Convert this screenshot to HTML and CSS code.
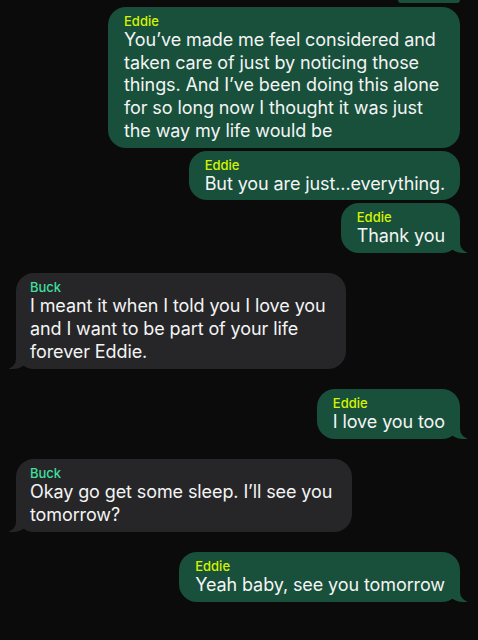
FILE: index.html
```html
<!DOCTYPE html>
<html lang="en">
<head>
    <meta charset="UTF-8">
    <meta name="viewport" content="width=device-width, initial-scale=1.0">
    <title>Messages</title>
    <link rel="stylesheet" href="styles.css">
</head>
<body>
    <div class="thread">
        <div class="group sent">
            <div class="bubble stub"></div>
            <div class="bubble wide">
                <div class="name">Eddie</div>
                <div class="text">You’ve made me feel considered and<br>taken care of just by noticing those<br>things. And I’ve been doing this alone<br>for so long now I thought it was just<br>the way my life would be</div>
            </div>
            <div class="bubble">
                <div class="name">Eddie</div>
                <div class="text">But you are just...everything.</div>
            </div>
            <div class="bubble tail">
                <div class="name">Eddie</div>
                <div class="text">Thank you</div>
            </div>
        </div>

        <div class="group received">
            <div class="bubble tail">
                <div class="name">Buck</div>
                <div class="text">I meant it when I told you I love you<br>and I want to be part of your life<br>forever Eddie.</div>
            </div>
        </div>

        <div class="group sent">
            <div class="bubble tail">
                <div class="name">Eddie</div>
                <div class="text">I love you too</div>
            </div>
        </div>

        <div class="group received">
            <div class="bubble tail">
                <div class="name">Buck</div>
                <div class="text">Okay go get some sleep. I’ll see you<br>tomorrow?</div>
            </div>
        </div>

        <div class="group sent">
            <div class="bubble tail">
                <div class="name">Eddie</div>
                <div class="text">Yeah baby, see you tomorrow</div>
            </div>
        </div>
    </div>
</body>
</html>
```

FILE: styles.css
```css
body {
    margin: 0;
    background-color: #0b0b0b;
    font-family: Inter, "Noto Sans", sans-serif;
    color: #f4f4f4;
}
.thread {
    display: flex;
    flex-direction: column;
    gap: 20.5px;
    overflow: hidden;
}
.group {
    display: flex;
    flex-direction: column;
    gap: 3px;
}
.group.sent {
    align-items: flex-end;
    margin-right: 18px;
}
.group.received {
    align-items: flex-start;
    margin-left: 16px;
}
.bubble {
    position: relative;
    padding: 6px 15px 5px 16px;
    border-radius: 18px;
}
.bubble.wide {
    min-width: 321px;
}
.sent .bubble {
    background-color: #18503b;
}
.received .bubble {
    background-color: #262628;
    padding-left: 14px;
    padding-right: 20px;
}
.bubble.stub {
    width: 62px;
    height: 3px;
    padding: 0;
    margin-bottom: 1px;
    border-radius: 0 0 14px 14px;
}
.name {
    font-size: 13px;
    line-height: 16px;
    font-weight: 500;
}
.sent .name {
    color: #d6f400;
}
.received .name {
    color: #40df9e;
}
.text {
    font-size: 18px;
    line-height: 22.7px;
    letter-spacing: -0.1px;
}
/* tails */
.sent .tail::before {
    content: "";
    position: absolute;
    bottom: 0;
    right: -7px;
    width: 20px;
    height: 20px;
    background-color: #18503b;
    border-bottom-left-radius: 16px 14px;
}
.sent .tail::after {
    content: "";
    position: absolute;
    bottom: 0;
    right: -26px;
    width: 26px;
    height: 20px;
    background-color: #0b0b0b;
    border-bottom-left-radius: 10px;
}
.received .tail::before {
    content: "";
    position: absolute;
    bottom: 0;
    left: -7px;
    width: 20px;
    height: 20px;
    background-color: #262628;
    border-bottom-right-radius: 16px 14px;
}
.received .tail::after {
    content: "";
    position: absolute;
    bottom: 0;
    left: -26px;
    width: 26px;
    height: 20px;
    background-color: #0b0b0b;
    border-bottom-right-radius: 10px;
}
```
